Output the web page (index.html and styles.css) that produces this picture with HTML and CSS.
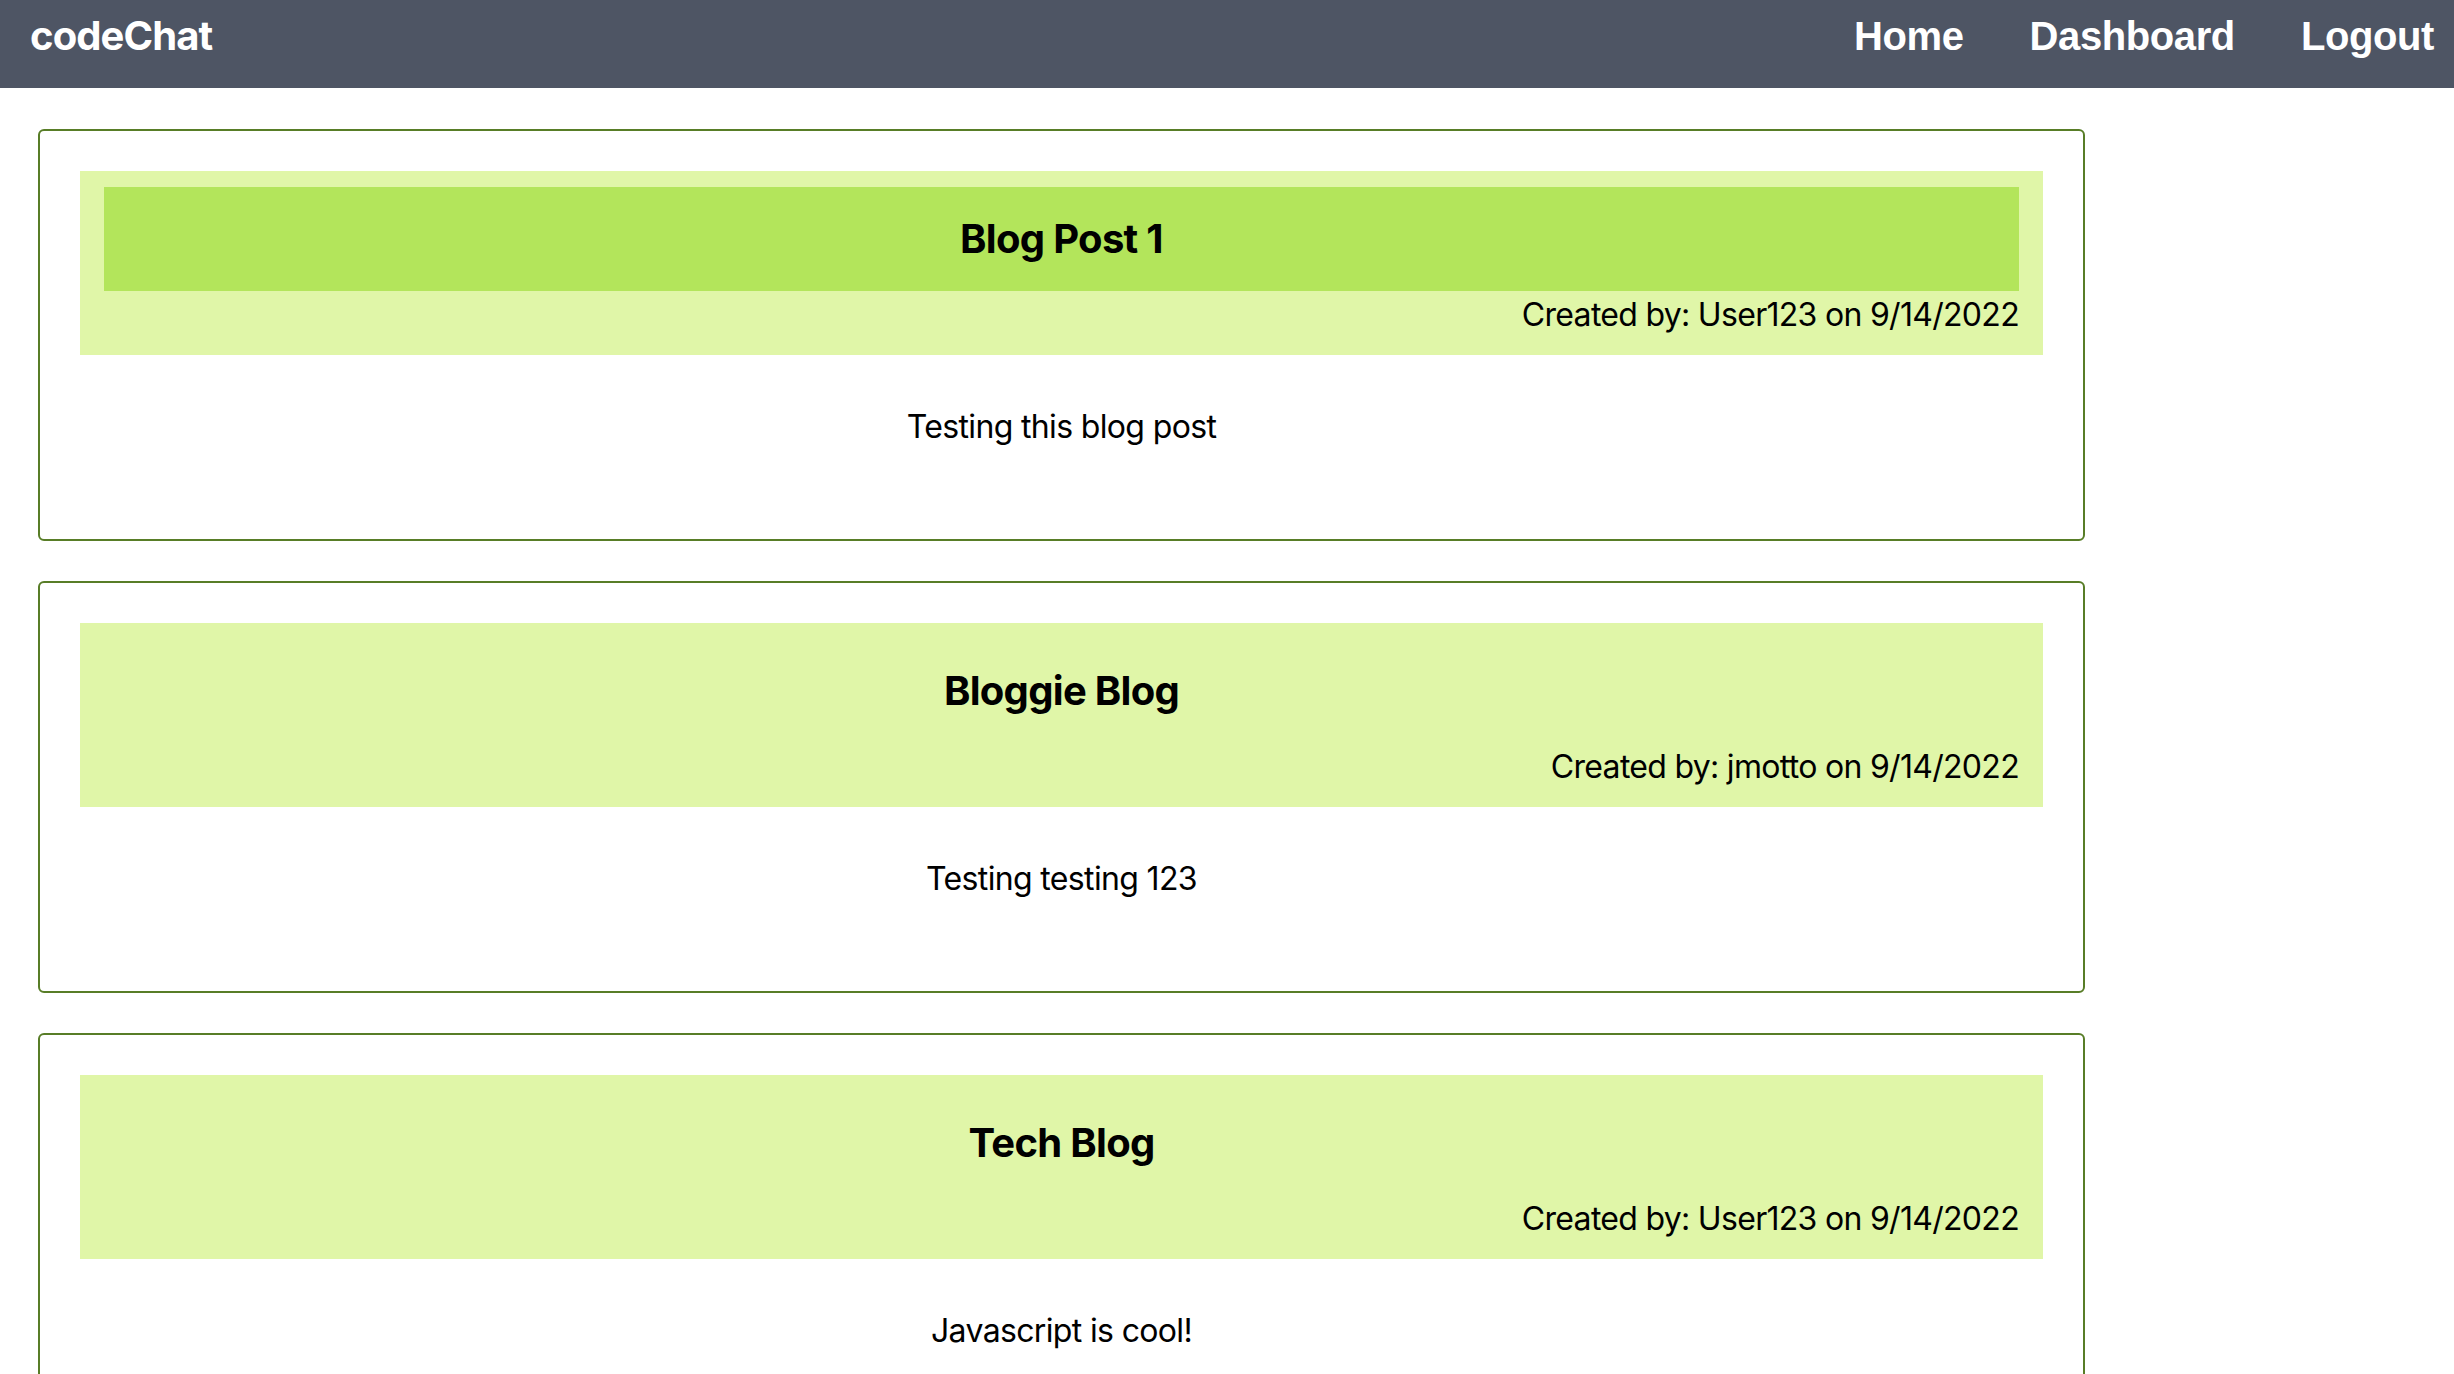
FILE: index.html
```html
<!DOCTYPE html>
<html lang="en">
<head>
<meta charset="utf-8">
<title>codeChat</title>
<link rel="stylesheet" href="styles.css">
</head>
<body>
<header class="topbar">
  <h1 class="brand">codeChat</h1>
  <nav class="nav">
    <a href="#" class="nav-link">Home</a>
    <a href="#" class="nav-link">Dashboard</a>
    <a href="#" class="nav-link">Logout</a>
  </nav>
</header>
<main class="posts">
  <article class="card">
    <div class="card-head">
      <h2 class="card-title active">Blog Post 1</h2>
      <p class="card-meta">Created by: User123 on 9/14/2022</p>
    </div>
    <p class="card-body">Testing this blog post</p>
  </article>
  <article class="card">
    <div class="card-head">
      <h2 class="card-title">Bloggie Blog</h2>
      <p class="card-meta">Created by: jmotto on 9/14/2022</p>
    </div>
    <p class="card-body">Testing testing 123</p>
  </article>
  <article class="card">
    <div class="card-head">
      <h2 class="card-title">Tech Blog</h2>
      <p class="card-meta">Created by: User123 on 9/14/2022</p>
    </div>
    <p class="card-body">Javascript is cool!</p>
  </article>
</main>
</body>
</html>
```
FILE: styles.css
```css
* { box-sizing: border-box; }
html, body { margin: 0; padding: 0; }
body {
  font-family: Inter, "Noto Sans", sans-serif;
  color: #000;
  background: #fff;
}
.topbar {
  height: 88px;
  background: #4e5564;
  display: flex;
  justify-content: space-between;
  align-items: flex-start;
  padding: 8px 20px 0 30px;
}
.brand {
  margin: 0;
  font-family: Inter, sans-serif;
  font-weight: 700;
  font-size: 40px;
  line-height: 56px;
  color: #fff;
  letter-spacing: -0.9px;
}
.nav {
  display: flex;
  gap: 66px;
}
.nav-link {
  font-family: "Liberation Sans", Arial, sans-serif;
  font-weight: 700;
  font-size: 40px;
  line-height: 56px;
  color: #fff;
  text-decoration: none;
  letter-spacing: -0.4px;
}
.posts {
  display: flex;
  flex-direction: column;
  gap: 40px;
  padding: 41px 38px;
}
.card {
  width: 2047px;
  border: 2px solid #587d27;
  border-radius: 6px;
  padding: 40px;
}
.card-head {
  background: #e0f6a8;
  padding: 16px 24px;
}
.card-title {
  margin: 0;
  padding: 24px 0;
  text-align: center;
  font-size: 40px;
  line-height: 56px;
  font-weight: 700;
  letter-spacing: -0.7px;
}
.card-title.active {
  background: #b3e55b;
}
.card-meta {
  margin: 0;
  text-align: right;
  font-size: 32px;
  line-height: 48px;
  letter-spacing: -0.7px;
}
.card-body {
  margin: 0;
  padding: 48px 0 48px;
  text-align: center;
  font-size: 32px;
  line-height: 48px;
  letter-spacing: -0.65px;
}
```
